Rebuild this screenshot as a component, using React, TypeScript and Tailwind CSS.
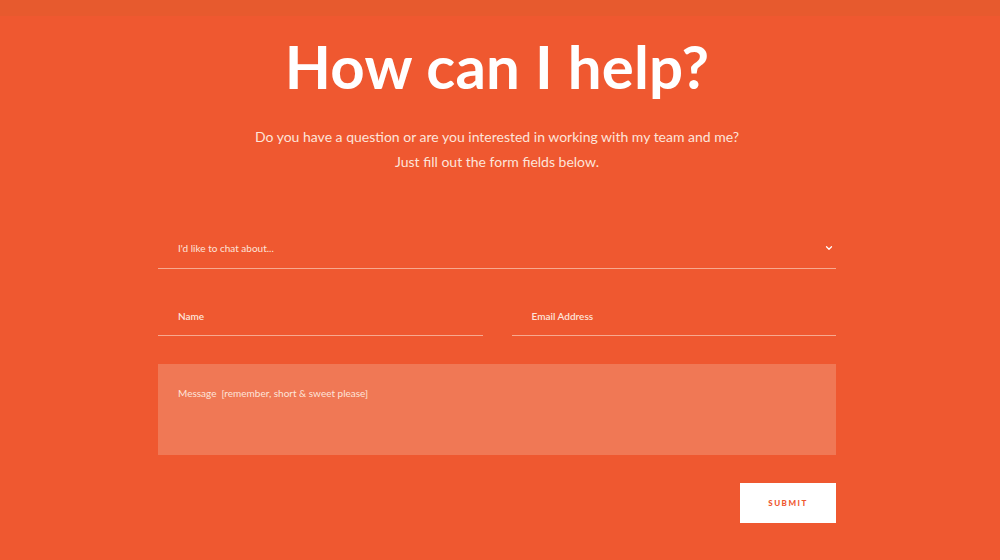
import { ChevronDown } from "lucide-react";

export default function App() {
  return (
    <div
      className="w-[1000px] h-[560px] bg-[#ef5830] flex flex-col overflow-hidden"
      style={{ fontFamily: "Lato, 'Open Sans', sans-serif" }}
    >
      <div className="w-full h-[16px] bg-[#e75a2e]" />
      <div className="flex flex-col items-center pr-[6px]">
        <h1 className="mt-[14px] text-[60px] leading-[72px] font-bold text-white tracking-[0.2px]">
          How can I help?
        </h1>
        <p className="mt-[22px] text-[14px] leading-[25px] text-[#fde4da] text-center">
          Do you have a question or are you interested in working with my team and me?
          <br />
          Just fill out the form fields below.
        </p>

        <form className="mt-[59px] w-[678px] flex flex-col">
          <div className="h-[36px] border-b border-[#f7a98f] flex items-center justify-between pl-[20px] pr-[2px] pb-[5px]">
            <span className="text-[10px] text-[#fde4da]">I'd like to chat about...</span>
            <ChevronDown className="w-[10px] h-[10px] text-white" strokeWidth={3} />
          </div>

          <div className="mt-[31px] flex gap-[29px]">
            <div className="flex-1 h-[36px] border-b border-[#f7a98f] flex items-center pl-[20px] pb-[3px]">
              <span className="text-[10px] font-semibold text-[#fde4da]">Name</span>
            </div>
            <div className="flex-1 h-[36px] border-b border-[#f7a98f] flex items-center pl-[20px] pb-[3px]">
              <span className="text-[10px] font-semibold text-[#fde4da]">Email Address</span>
            </div>
          </div>

          <div className="mt-[28px] h-[91px] bg-[#f07855] pl-[20px] pt-[15px]">
            <span className="text-[10px] text-[#fde4da]">Message&nbsp; [remember, short &amp; sweet please]</span>
          </div>

          <div className="mt-[28px] flex justify-end">
            <button
              type="button"
              className="w-[96px] h-[40px] bg-white text-[#ef5830] text-[8px] font-black tracking-[1.5px]"
            >
              SUBMIT
            </button>
          </div>
        </form>
      </div>
    </div>
  );
}
